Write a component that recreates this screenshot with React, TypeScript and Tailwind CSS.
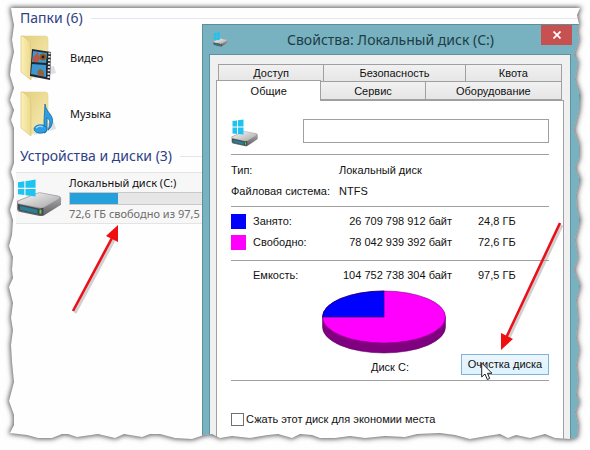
import React from "react";

const TORN_EDGE =
  "M11 8 L580 8 L577 15 L579 24 L577 30 L579 40 L574 55 L578 62 L575 80 L580 95 L579 110 L574 130 L579 145 L579 158 L575 168 L580 180 L576 195 L577 210 L580 220 L575 240 L578 258 L574 270 L580 286 L576 300 L578 320 L576 338 L579 350 L576 365 L578 380 L576 395 L579 402 L575 412 L578 425 L577 437 L570 439 L555 438 L545 434 L530 438 L516 435 L508 438 L500 434 L487 436 L470 439 L455 435 L440 433 L417 434 L405 437 L385 436 L365 438 L350 436 L335 438 L320 438 L312 435 L300 434 L292 438 L278 434 L268 435 L250 438 L232 436 L220 438 L212 434 L204 435 L192 439 L175 438 L160 434 L150 434 L142 437 L124 434 L115 438 L98 434 L77 437 L68 434 L62 434 L52 438 L38 438 L27 435 L10 433 L14 425 L14 415 L9 401 L14 382 L12 362 L11 345 L13 330 L11 318 L13 303 L9 287 L13 278 L12 270 L13 257 L9 246 L12 235 L13 220 L10 210 L14 197 L14 182 L11 172 L14 163 L14 128 L11 120 L14 110 L10 100 L14 88 L10 75 L11 65 L14 52 L12 40 L14 25 L12 15 Z";

function TornFrame() {
  return (
    <svg
      className="pointer-events-none absolute inset-0 z-30 h-full w-full"
      viewBox="0 0 590 450"
      preserveAspectRatio="none"
      aria-hidden="true"
    >
      <defs>
        <clipPath id="outside">
          <path clipRule="evenodd" d={"M0 0H590V450H0Z " + TORN_EDGE} />
        </clipPath>
        <filter id="soft" x="-5%" y="-5%" width="110%" height="110%">
          <feGaussianBlur stdDeviation="2.6" />
        </filter>
      </defs>
      <g clipPath="url(#outside)">
        <rect width="590" height="450" fill="#fefefe" />
        <path d={TORN_EDGE} fill="#555" stroke="#555" strokeWidth="2" filter="url(#soft)" />
      </g>
    </svg>
  );
}

function FolderIcon({ kind }: { kind: "video" | "music" }) {
  return (
    <svg className="h-[46px] w-9 shrink-0" viewBox="0 0 36 46" aria-hidden="true">
      <defs>
        <linearGradient id={"back-" + kind} x1="0" y1="0" x2="1" y2="1">
          <stop offset="0" stopColor="#e3cd7c" />
          <stop offset="1" stopColor="#f8eeb6" />
        </linearGradient>
        <linearGradient id={"flap-" + kind} x1="0" y1="0" x2="1" y2="0">
          <stop offset="0" stopColor="#fbf0b4" />
          <stop offset="1" stopColor="#ecd98f" />
        </linearGradient>
      </defs>
      <path d="M14 44 L36 38 L34 31 L16 34Z" fill="#aaa" opacity="0.35" />
      <path d="M1 1 L25 1 Q28 1 28 4 L28 36 L11 43Z" fill={"url(#back-" + kind + ")"} stroke="#e6d58f" strokeWidth="0.6" />
      <path d="M1 1 L3 1 L10 7 L11 16 L11 45 L1 37Z" fill={"url(#flap-" + kind + ")"} stroke="#d7c174" strokeWidth="0.6" />
      {kind === "video" ? (
        <g>
          <path d="M12 14 L31 17 L30 45 L10 41Z" fill="#23262d" />
          <path d="M13 16 L27 18 L26 28 L12 27Z" fill="#3a9bd0" />
          <path d="M12 29 L26 30 L26 42 L11 39Z" fill="#3b98d4" />
          <path d="M13 22 L18 17 L20 24 L18 27 L13 27Z" fill="#b8564a" />
          <circle cx="23" cy="22" r="3.4" fill="#8f5a26" />
          <circle cx="23" cy="22" r="1.4" fill="#231a18" />
          <path d="M18 40 Q16 36 20 34 Q25 35 24 41Z" fill="#9a612f" />
          <path d="M29.500 17.500 L28.500 44" stroke="#eee" strokeWidth="2.2" strokeDasharray="1.8 1.6" />
        </g>
      ) : (
        <g fill="#2d9ee0" stroke="#1769a8" strokeWidth="0.8">
          <path d="M25 13 C26 22 35 24 32 33 C31 37 29 38 28 39 C31 32 30 28 27 27 L27 37 C27 40 26 42 24 42 L24 30Z" />
          <ellipse cx="20.500" cy="38" rx="6.500" ry="4.200" />
          <path d="M16 37 Q19 34 23 36" stroke="#9bdcff" strokeWidth="1.2" fill="none" />
        </g>
      )}
    </svg>
  );
}

function DriveBody({ id }: { id: string }) {
  return (
    <>
      <defs>
        <linearGradient id={id + "-top"} x1="0" y1="0" x2="1" y2="1">
          <stop offset="0" stopColor="#fafafa" />
          <stop offset="1" stopColor="#a3a3a5" />
        </linearGradient>
        <linearGradient id={id + "-side"} x1="0" y1="0" x2="0" y2="1">
          <stop offset="0" stopColor="#b5b5b7" />
          <stop offset="1" stopColor="#5f6063" />
        </linearGradient>
      </defs>
      <path d="M1 22 L22 14 L44 17 Q47 18 46 22 L46 26 L28 37 Q26 38 23 37 L3 33 Q1 32 1 30Z" fill={"url(#" + id + "-side)"} />
      <path d="M2 22 L22 14 Q24 13 27 14 L43 17 Q46 18 44 20 L28 29 Q26 30 23 29 L3 25 Q1 24 2 22Z" fill={"url(#" + id + "-top)"} stroke="#8f8f92" strokeWidth="0.6" />
      <path d="M2 25 L24 30 L28 29 L28 36 L24 36 L4 32 Q2 31 2 29Z" fill="#43484b" />
      <path d="M4 27 L22 31 L22 35 L4 31Z" fill="#2a7f96" />
      <rect x="24" y="31" width="2" height="4" fill="#5fd34f" />
    </>
  );
}

function DriveIcon() {
  return (
    <svg className="h-[38px] w-[47px] shrink-0" viewBox="0 0 48 38" aria-hidden="true">
      <DriveBody id="big" />
      <path d="M2 3 L8.500 2 V8.500 H2Z M9.700 1.800 L20 0 V8.500 H9.700Z M2 9.700 H8.500 V16 L2 15.200Z M9.700 9.700 H20 V17.500 L9.700 16.200Z" fill="#1fc3f0" />
    </svg>
  );
}

function SmallDriveIcon({ className, id }: { className: string; id: string }) {
  return (
    <svg className={className} viewBox="0 0 28 28" aria-hidden="true">
      <g transform="translate(0 4) scale(0.58 0.62)">
        <DriveBody id={id} />
      </g>
      <path d="M1.500 2 L6 1.500 V7.500 H1.500Z M7 1.300 L12.500 0.500 V7.500 H7Z M1.500 8.500 H6 V15 L1.500 14.500Z M7 8.500 H12.500 V15.500 L7 15Z" fill="#1fc3f0" />
    </svg>
  );
}

function GroupHeading({ title }: { title: string }) {
  return (
    <h2 className="flex items-center gap-2 pl-1 text-[14px] leading-5 text-[#2f3f86]">
      <span>{title}</span>
      <span className="h-px flex-1 bg-[#e3e6ee]" />
    </h2>
  );
}

function Explorer() {
  return (
    <main className="col-start-1 row-start-1 pl-4 pt-2 font-['Noto_Sans',sans-serif] text-[11px] text-[#111]">
      <GroupHeading title="Папки (6)" />
      <ul>
        <li className="flex h-14 items-center gap-[14px] pl-1 pt-1">
          <FolderIcon kind="video" />
          <span>Видео</span>
        </li>
        <li className="flex h-14 items-center gap-[14px] pl-1 pt-1">
          <FolderIcon kind="music" />
          <span>Музыка</span>
        </li>
      </ul>
      <div className="pt-[6px]">
        <GroupHeading title="Устройства и диски (3)" />
      </div>
      <section className="mt-[6px] flex h-[52px] items-center gap-[6px] border-y border-[#e4e4e4] bg-[#f7f7f7]">
        <DriveIcon />
        <div className="min-w-0 flex-1">
          <div className="leading-[18px]">Локальный диск (C:)</div>
          <div className="h-[13px] border border-[#c9c9c9] bg-[#e6e6e6]">
            <div className="h-full w-12 bg-[#26a0da]" />
          </div>
          <div className="whitespace-nowrap leading-[18px] text-[#6d6d6d]">72,6 ГБ свободно из 97,5 ГБ</div>
        </div>
      </section>
    </main>
  );
}

const tabBase = "border border-[#a0a0a0] bg-linear-to-b from-[#f1f1f1] to-[#e6e6e6] leading-4";

function Tabs() {
  return (
    <div role="tablist" className="px-[2px]">
      <div className="flex h-[18px]">
        <button role="tab" className={tabBase + " grow basis-[106px]"}>Доступ</button>
        <button role="tab" className={tabBase + " grow basis-[141px] border-l-0"}>Безопасность</button>
        <button role="tab" className={tabBase + " grow basis-[96px] border-l-0"}>Квота</button>
      </div>
      <div className="flex h-[18px] items-end">
        <button
          role="tab"
          aria-selected="true"
          className="relative z-10 -mb-px -ml-[2px] h-[21px] grow basis-[105px] border border-b-0 border-[#a0a0a0] bg-white leading-4"
        >
          Общие
        </button>
        <button role="tab" className={tabBase + " h-[18px] grow basis-[103px] border-x-0 border-t-0"}>Сервис</button>
        <button role="tab" className={tabBase + " h-[18px] grow basis-[137px] border-t-0"}>Оборудование</button>
      </div>
    </div>
  );
}

function Rule() {
  return <hr className="border-[#a0a0a0]" />;
}

function Usage({ color, label, bytes, size }: { color?: string; label: string; bytes: string; size: string }) {
  return (
    <tr className="h-[21px]">
      <td className="w-[22px]">{color && <div className={"size-[15px] " + color} />}</td>
      <th scope="row" className="text-left font-normal">{label}</th>
      <td className="w-[120px] text-right">{bytes}</td>
      <td className="w-[97px] pl-[26px]">{size}</td>
    </tr>
  );
}

function PieChart() {
  return (
    <svg className="h-16 w-[124px]" viewBox="0 0 124 64" role="img" aria-label="Диск C:">
      <path d="M0.500 27 V37 A61.500 26 0 0 0 123.500 37 V27Z" fill="#800080" stroke="#500060" strokeWidth="0.5" />
      <ellipse cx="62" cy="27" rx="61.500" ry="26" fill="#f0f" stroke="#800080" strokeWidth="0.6" />
      <path d="M62 27 H0.500 A61.500 26 0 0 1 62 1Z" fill="#00f" stroke="#000060" strokeWidth="0.6" />
    </svg>
  );
}

function Cursor() {
  return (
    <svg className="absolute left-5 top-2 h-[19px] w-3" viewBox="0 0 12 19" aria-hidden="true">
      <path d="M0.700 1 V15 L4 12 L6.300 17.500 L8.700 16.500 L6.500 11.300 H11Z" fill="#fff" stroke="#222" strokeWidth="1" />
    </svg>
  );
}

function Dialog() {
  return (
    <section
      aria-label="Свойства: Локальный диск (C:)"
      className="relative z-10 col-start-1 row-start-1 ml-[202px] mr-[10px] mt-6 flex flex-col border border-[#5a8f9c] bg-[#78b1bf]"
    >
      <header className="flex h-[29px] items-center pl-[10px]">
        <SmallDriveIcon className="size-[15px] shrink-0" id="small" />
        <h1 className="flex-1 pl-3 text-center font-['Noto_Sans',sans-serif] text-[14px] text-[#1e3c46]">
          Свойства: Локальный диск (C:)
        </h1>
        <button aria-label="Закрыть" className="mr-[7px] flex h-5 w-[31px] items-center justify-center self-start bg-[#c75050]">
          <svg className="size-2" viewBox="0 0 8 8" aria-hidden="true">
            <path d="M0.500 0.500 L7.500 7.500 M7.500 0.500 L0.500 7.500" stroke="#fff" strokeWidth="1.7" />
          </svg>
        </button>
      </header>
      <div className="ml-[6px] mr-2 flex flex-1 flex-col border-x border-t border-[#5f929f] bg-[#f0f0f0] px-[6px] pt-[9px] font-['Liberation_Sans',sans-serif] text-[11px] text-[#111]">
        <Tabs />
        <div role="tabpanel" className="flex-1 border-x border-t border-[#a0a0a0] bg-white px-[14px] pt-[18px]">
          <div className="flex h-[35px] items-start justify-between">
            <SmallDriveIcon className="size-[28px]" id="medium" />
            <input aria-label="Метка тома" className="h-6 w-[246px] border border-[#a0a0a0] bg-white px-1" />
          </div>
          <Rule />
          <dl className="grid h-[51px] grid-cols-[108px_1fr] content-center leading-[21px]">
            <dt className="whitespace-nowrap">Тип:</dt>
            <dd>Локальный диск</dd>
            <dt className="whitespace-nowrap">Файловая система:</dt>
            <dd>NTFS</dd>
          </dl>
          <Rule />
          <div className="pb-[7px] pt-1">
            <table className="w-full">
              <tbody>
                <Usage color="bg-[#0000ff]" label="Занято:" bytes="26 709 798 912 байт" size="24,8 ГБ" />
                <Usage color="bg-[#ff00ff]" label="Свободно:" bytes="78 042 939 392 байт" size="72,6 ГБ" />
              </tbody>
            </table>
          </div>
          <Rule />
          <table className="mt-1 w-full">
            <tbody>
              <Usage label="Емкость:" bytes="104 752 738 304 байт" size="97,5 ГБ" />
            </tbody>
          </table>
          <div className="flex justify-center pr-3 pt-1">
            <PieChart />
          </div>
          <div className="grid grid-cols-[1fr_auto_1fr] items-end pb-[5px]">
            <span className="col-start-2">Диск C:</span>
            <div className="relative justify-self-end">
              <button className="h-[21px] w-[88px] whitespace-nowrap border border-[#7eb4d8] bg-linear-to-b from-[#ecf5fc] to-[#dcf3fd]">
                Очистка диска
              </button>
              <Cursor />
            </div>
          </div>
          <Rule />
          <label className="mt-[30px] flex items-center gap-[2px] whitespace-nowrap">
            <input type="checkbox" className="size-[13px] appearance-none border border-[#707070] bg-white" />
            Сжать этот диск для экономии места
          </label>
        </div>
      </div>
    </section>
  );
}

export default function App() {
  return (
    <div className="relative grid min-h-screen overflow-hidden bg-[#fefefe]">
      <Explorer />
      <Dialog />
      <svg className="pointer-events-none absolute left-[68px] top-[222px] z-20 h-24 w-14" viewBox="0 0 56 96" aria-hidden="true">
        <path d="M7 91 L46 18" stroke="#999" strokeWidth="3" opacity="0.45" />
        <path d="M5 89 L44 16" stroke="#e8101a" strokeWidth="2.6" />
        <path d="M50 3 L50 20 L38 14Z" fill="#f00f0f" />
      </svg>
      <svg className="pointer-events-none absolute left-[496px] top-[218px] z-20 h-[136px] w-[70px]" viewBox="0 0 70 136" aria-hidden="true">
        <path d="M66 7 L12 122" stroke="#999" strokeWidth="3" opacity="0.45" />
        <path d="M64 5 L10 120" stroke="#e8101a" strokeWidth="2.6" />
        <path d="M5 132 L5 115 L17 121Z" fill="#f00f0f" />
      </svg>
      <TornFrame />
    </div>
  );
}
